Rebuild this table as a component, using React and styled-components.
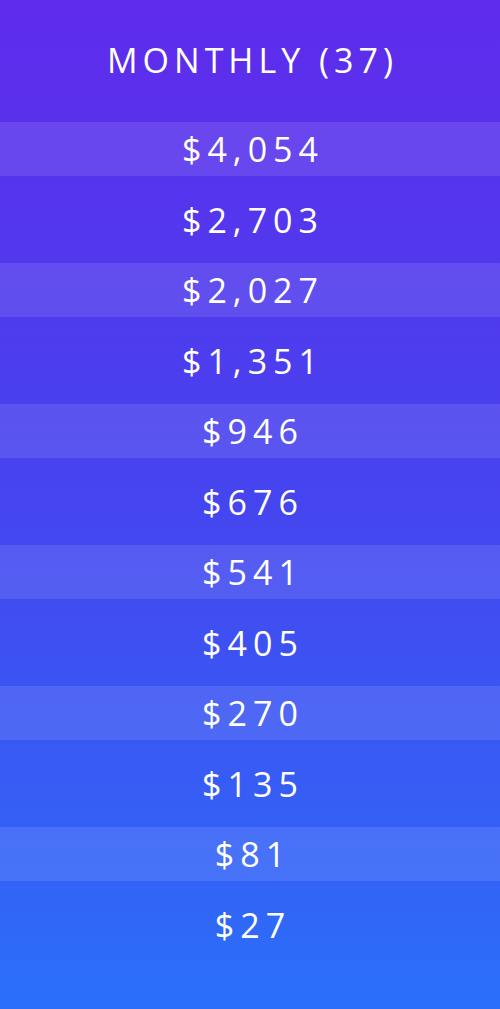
import React from "react";
import styled, { createGlobalStyle } from "styled-components";

const GlobalStyle = createGlobalStyle`
  html, body {
    margin: 0;
    padding: 0;
  }
  body {
    font-family: "Open Sans", "Liberation Sans", sans-serif;
    background: #2b6ff9;
  }
`;

const Panel = styled.div`
  width: 500px;
  height: 1009px;
  display: flex;
  flex-direction: column;
  background: linear-gradient(180deg, #5f2bec 0%, #4545ef 50%, #2b6ff9 100%);
  color: #fff;
`;

const Header = styled.h1`
  margin: 0;
  height: 120px;
  padding-bottom: 2px;
  display: flex;
  align-items: center;
  justify-content: center;
  font-size: 34px;
  font-weight: 400;
  letter-spacing: 5px;
  padding-left: 5px;
`;

const Row = styled.div`
  height: ${(p) => (p.$highlight ? "54px" : "87px")};
  flex-shrink: 0;
  display: flex;
  align-items: center;
  justify-content: center;
  font-size: 34px;
  letter-spacing: 6px;
  padding-left: 6px;
  background: ${(p) => (p.$highlight ? "rgba(255, 255, 255, 0.1)" : "transparent")};
`;

const prices = [
  "$4,054",
  "$2,703",
  "$2,027",
  "$1,351",
  "$946",
  "$676",
  "$541",
  "$405",
  "$270",
  "$135",
  "$81",
  "$27",
];

export default function App() {
  return (
    <>
      <GlobalStyle />
      <Panel>
        <Header>MONTHLY (37)</Header>
        {prices.map((price, i) => (
          <Row key={price} $highlight={i % 2 === 0}>
            {price}
          </Row>
        ))}
      </Panel>
    </>
  );
}
